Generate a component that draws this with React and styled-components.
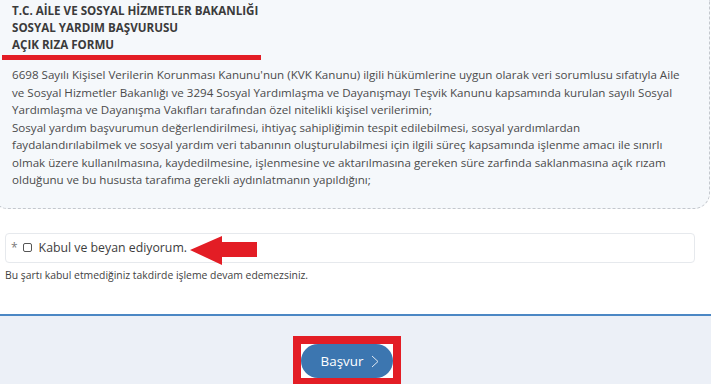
import React from "react";
import styled, { createGlobalStyle } from "styled-components";

const Global = createGlobalStyle`
  html, body { margin: 0; padding: 0; background: #ffffff; }
  body { font-family: "Open Sans", "Noto Sans", sans-serif; overflow: hidden; }
  #root { width: 711px; height: 384px; overflow: hidden; }
`;

const Page = styled.div`
  width: 711px;
  height: 384px;
  display: flex;
  flex-direction: column;
  overflow: hidden;
`;

const Content = styled.div`
  padding: 0 16px 0 0;
  display: flex;
  flex-direction: column;
`;

const Panel = styled.section`
  margin-left: -8px;
  width: 718px;
  box-sizing: border-box;
  background: #f5f8fb;
  border: 1px dashed #c4c8ce;
  border-top: none;
  border-radius: 0 0 16px 16px;
  padding: 2px 10px 19px 19px;
`;

const Title = styled.h1`
  margin: 0;
  font-size: 11.6px;
  line-height: 17px;
  font-weight: 700;
  color: #3b3b3b;
`;

const Underline = styled.div`
  margin: 2px 0 0 -10px;
  width: 259px;
  height: 5px;
  background: #e31d25;
`;

const Body = styled.p`
  margin: 6px 0 0 0;
  font-size: 11.6px;
  line-height: 17.5px;
  color: #4b4b4b;
`;

const ConsentRow = styled.label`
  position: relative;
  margin: 24px 0 0 5px;
  width: 690px;
  height: 30px;
  box-sizing: border-box;
  border: 1px solid #e6e9ed;
  border-radius: 4px;
  display: flex;
  align-items: center;
  padding-left: 5px;
  font-size: 12.3px;
  color: #3d3d3d;
`;

const Star = styled.span`
  color: #7a7a7a;
  font-size: 12px;
  margin-right: 5px;
`;

const Box = styled.span`
  width: 7px;
  height: 7px;
  border: 1px solid #555;
  border-radius: 2px;
  margin-right: 7px;
  background: #fff;
`;

const Arrow = styled.svg`
  position: absolute;
  left: 184px;
  top: 2px;
`;

const Hint = styled.div`
  margin: 5px 0 0 5px;
  font-size: 10.4px;
  line-height: 15px;
  color: #3f3f3f;
`;

const Footer = styled.footer`
  margin-top: auto;
  height: 48px;
  border-top: 2px solid #4b87c4;
  background: #ecf0f7;
  display: flex;
  justify-content: center;
  align-items: flex-start;
  padding: 20px 17px 0 0;
  box-sizing: content-box;
`;

const Highlight = styled.div`
  border: 8px solid #e31d25;
  background: #fff;
  padding: 0;
  display: flex;
  flex-shrink: 0;
`;

const Button = styled.button`
  width: 92px;
  height: 34px;
  border: none;
  border-radius: 17px;
  background: #3c76b0;
  color: #fff;
  font-family: "Open Sans", sans-serif;
  font-size: 13.4px;
  display: flex;
  align-items: center;
  justify-content: center;
  gap: 8px;
  padding: 0 0 0 6px;
  cursor: pointer;
`;

export default function App() {
  return (
    <>
      <Global />
      <Page>
        <Content>
          <Panel>
            <Title>
              T.C. AİLE VE SOSYAL HİZMETLER BAKANLIĞI
              <br />
              SOSYAL YARDIM BAŞVURUSU
              <br />
              AÇIK RIZA FORMU
            </Title>
            <Underline />
            <Body>
              6698 Sayılı Kişisel Verilerin Korunması Kanunu'nun (KVK Kanunu) ilgili hükümlerine uygun olarak veri sorumlusu sıfatıyla Aile
              <br />
              ve Sosyal Hizmetler Bakanlığı ve 3294 Sosyal Yardımlaşma ve Dayanışmayı Teşvik Kanunu kapsamında kurulan sayılı Sosyal
              <br />
              Yardımlaşma ve Dayanışma Vakıfları tarafından özel nitelikli kişisel verilerimin;
              <br />
              Sosyal yardım başvurumun değerlendirilmesi, ihtiyaç sahipliğimin tespit edilebilmesi, sosyal yardımlardan
              <br />
              faydalandırılabilmek ve sosyal yardım veri tabanının oluşturulabilmesi için ilgili süreç kapsamında işlenme amacı ile sınırlı
              <br />
              olmak üzere kullanılmasına, kaydedilmesine, işlenmesine ve aktarılmasına gereken süre zarfında saklanmasına açık rızam
              <br />
              olduğunu ve bu hususta tarafıma gerekli aydınlatmanın yapıldığını;
            </Body>
          </Panel>
          <ConsentRow>
            <Star>*</Star>
            <Box />
            Kabul ve beyan ediyorum.
            <Arrow width="68" height="29" viewBox="0 0 68 29">
              <polygon points="0,14 32,0 32,6 67,6 67,21 32,21 32,29" fill="#e31d25" />
            </Arrow>
          </ConsentRow>
          <Hint>Bu şartı kabul etmediğiniz takdirde işleme devam edemezsiniz.</Hint>
        </Content>
        <Footer>
          <Highlight>
            <Button type="button">
              Başvur
              <svg width="8" height="13" viewBox="0 0 8 13">
                <polyline points="1,1 7,6.5 1,12" fill="none" stroke="#dfe8f2" strokeWidth="1" />
              </svg>
            </Button>
          </Highlight>
        </Footer>
      </Page>
    </>
  );
}
